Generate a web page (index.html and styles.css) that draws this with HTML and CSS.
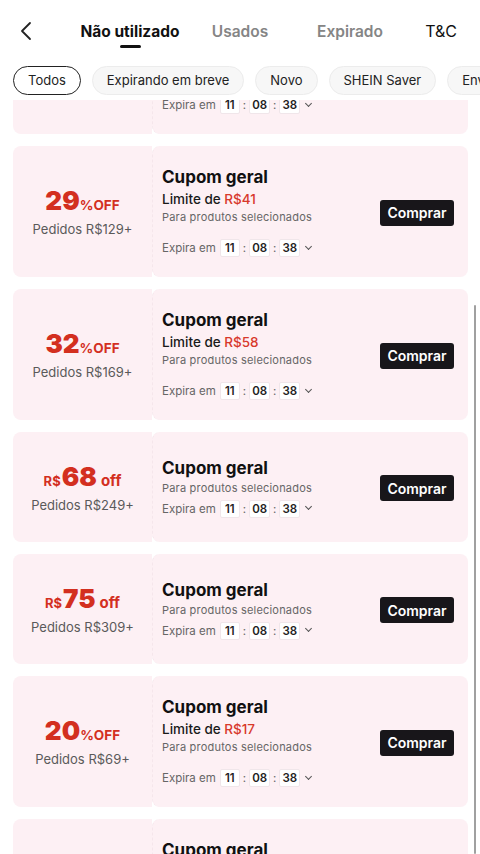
FILE: index.html
```html
<!DOCTYPE html>
<html lang="pt">
<head>
  <meta charset="UTF-8" />
  <meta name="viewport" content="width=device-width, initial-scale=1.0"/>
  <title>Cupons</title>
  <link rel="stylesheet" href="styles.css">
</head>
<body>

  <header class="top-bar">
    <svg class="back" width="14" height="20" viewBox="0 0 14 20"><path d="M11 2 L3 10 L11 18" fill="none" stroke="#222" stroke-width="1.8" stroke-linecap="round" stroke-linejoin="round"/></svg>
    <nav class="tabs">
      <span class="tab active">Não utilizado</span>
      <span class="tab">Usados</span>
      <span class="tab">Expirado</span>
    </nav>
    <span class="tc">T&amp;C</span>
  </header>

  <div class="chips">
    <span class="chip selected">Todos</span>
    <span class="chip">Expirando em breve</span>
    <span class="chip">Novo</span>
    <span class="chip">SHEIN Saver</span>
    <span class="chip">Envio grátis</span>
  </div>

  <main class="viewport">
    <div class="scroll-thumb"></div>
    <div class="list">

      <div class="coupon limited">
        <div class="stub">
          <div class="amount"><b>25</b><small>%OFF</small></div>
          <div class="min">Pedidos R$99+</div>
        </div>
        <div class="body">
          <div class="info">
            <div class="title">Cupom geral</div>
            <div class="limit">Limite de <em>R$30</em></div>
            <div class="scope">Para produtos selecionados</div>
            <div class="expire">Expira em <i>11</i>:<i>08</i>:<i>38</i><span class="chev"></span></div>
          </div>
          <button class="buy">Comprar</button>
        </div>
      </div>

      <div class="coupon limited">
        <div class="stub">
          <div class="amount"><b>29</b><small>%OFF</small></div>
          <div class="min">Pedidos R$129+</div>
        </div>
        <div class="body">
          <div class="info">
            <div class="title">Cupom geral</div>
            <div class="limit">Limite de <em>R$41</em></div>
            <div class="scope">Para produtos selecionados</div>
            <div class="expire">Expira em <i>11</i>:<i>08</i>:<i>38</i><span class="chev"></span></div>
          </div>
          <button class="buy">Comprar</button>
        </div>
      </div>

      <div class="coupon limited">
        <div class="stub">
          <div class="amount"><b>32</b><small>%OFF</small></div>
          <div class="min">Pedidos R$169+</div>
        </div>
        <div class="body">
          <div class="info">
            <div class="title">Cupom geral</div>
            <div class="limit">Limite de <em>R$58</em></div>
            <div class="scope">Para produtos selecionados</div>
            <div class="expire">Expira em <i>11</i>:<i>08</i>:<i>38</i><span class="chev"></span></div>
          </div>
          <button class="buy">Comprar</button>
        </div>
      </div>

      <div class="coupon">
        <div class="stub">
          <div class="amount"><small class="cur">R$</small><b>68</b><small class="off">off</small></div>
          <div class="min">Pedidos R$249+</div>
        </div>
        <div class="body">
          <div class="info">
            <div class="title">Cupom geral</div>
            <div class="scope">Para produtos selecionados</div>
            <div class="expire">Expira em <i>11</i>:<i>08</i>:<i>38</i><span class="chev"></span></div>
          </div>
          <button class="buy">Comprar</button>
        </div>
      </div>

      <div class="coupon">
        <div class="stub">
          <div class="amount"><small class="cur">R$</small><b>75</b><small class="off">off</small></div>
          <div class="min">Pedidos R$309+</div>
        </div>
        <div class="body">
          <div class="info">
            <div class="title">Cupom geral</div>
            <div class="scope">Para produtos selecionados</div>
            <div class="expire">Expira em <i>11</i>:<i>08</i>:<i>38</i><span class="chev"></span></div>
          </div>
          <button class="buy">Comprar</button>
        </div>
      </div>

      <div class="coupon limited">
        <div class="stub">
          <div class="amount"><b>20</b><small>%OFF</small></div>
          <div class="min">Pedidos R$69+</div>
        </div>
        <div class="body">
          <div class="info">
            <div class="title">Cupom geral</div>
            <div class="limit">Limite de <em>R$17</em></div>
            <div class="scope">Para produtos selecionados</div>
            <div class="expire">Expira em <i>11</i>:<i>08</i>:<i>38</i><span class="chev"></span></div>
          </div>
          <button class="buy">Comprar</button>
        </div>
      </div>

      <div class="coupon limited">
        <div class="stub">
          <div class="amount"><b>15</b><small>%OFF</small></div>
          <div class="min">Pedidos R$49+</div>
        </div>
        <div class="body">
          <div class="info">
            <div class="title">Cupom geral</div>
            <div class="limit">Limite de <em>R$12</em></div>
            <div class="scope">Para produtos selecionados</div>
            <div class="expire">Expira em <i>11</i>:<i>08</i>:<i>38</i><span class="chev"></span></div>
          </div>
          <button class="buy">Comprar</button>
        </div>
      </div>

    </div>
  </main>

</body>
</html>
```

FILE: styles.css
```css
* {
  box-sizing: border-box;
}

html, body {
  margin: 0;
  padding: 0;
  height: 854px;
  overflow: hidden;
  background: #fff;
  color: #111;
  font-family: Inter, "Noto Sans", sans-serif;
}

body {
  display: flex;
  flex-direction: column;
}

/* header with tabs */
.top-bar {
  height: 56px;
  display: flex;
  align-items: center;
  padding: 6px 23px 0 19px;
  box-shadow: 0 1px 2px rgba(0, 0, 0, 0.05);
  position: relative;
  z-index: 2;
  background: #fff;
}

.back {
  flex: none;
}

.tabs {
  display: flex;
  margin-left: 42px;
  flex: 1;
}

.tab {
  width: 110px;
  text-align: center;
  font-size: 15.5px;
  font-weight: 600;
  color: #858585;
  position: relative;
}

.tab.active {
  color: #111;
  font-weight: 700;
}

.tab.active::after {
  content: '';
  position: absolute;
  left: 50%;
  bottom: -7px;
  width: 21px;
  height: 3px;
  margin-left: -10px;
  background: #111;
  border-radius: 2px;
}

.tc {
  font-size: 16px;
  font-weight: 400;
  color: #111;
}

/* filter chips */
.chips {
  display: flex;
  gap: 11px;
  padding: 10px 0 6px 13px;
  height: 44px;
  overflow: hidden;
  white-space: nowrap;
  background: #fff;
  position: relative;
  z-index: 2;
}

.chip {
  flex: none;
  height: 29px;
  line-height: 27px;
  padding: 0 14px;
  border-radius: 15px;
  border: 1px solid #ececec;
  background: #f7f7f7;
  font-size: 13px;
  color: #222;
}

.chip.selected {
  background: #fff;
  border: 1.5px solid #222;
  line-height: 26px;
  padding: 0 14px;
}

/* coupon list */
.viewport {
  flex: 1;
  overflow: hidden;
  position: relative;
}

.list {
  margin-top: -97px;
  padding: 0 12px 0 13px;
  display: flex;
  flex-direction: column;
  gap: 12px;
}

.scroll-thumb {
  position: absolute;
  right: 4px;
  top: 205px;
  bottom: 0;
  width: 2.5px;
  border-radius: 2px;
  background: #a0a0a0;
  z-index: 3;
}

.coupon {
  display: flex;
  min-height: 110px;
}

.coupon.limited {
  min-height: 131px;
}

.stub {
  width: 139px;
  flex: none;
  background: #fdf0f4;
  border-radius: 8px 0 0 8px;
  display: flex;
  flex-direction: column;
  align-items: center;
  justify-content: center;
}

.amount {
  color: #d32f1f;
  font-weight: 700;
  line-height: 30px;
}

.amount b {
  font-size: 26px;
}

.amount small {
  font-size: 13.5px;
  margin-left: 0;
}

.amount small.cur {
  font-size: 13px;
  margin: 0 1px 0 0;
}

.amount small.off {
  font-size: 15px;
  margin-left: 4px;
}

.min {
  font-size: 13px;
  color: #5a5a5a;
  margin-top: 1px;
}

.body {
  flex: 1;
  background: #fdf0f4;
  border-radius: 8px;
  border-left: 1px dashed #f5e6eb;
  display: flex;
  align-items: center;
  padding: 0 14px 0 9px;
}

.info {
  flex: 1;
}

.title {
  font-size: 17px;
  font-weight: 700;
  line-height: 22px;
  margin-bottom: 1px;
}

.limit {
  font-size: 13.5px;
  font-weight: 500;
  line-height: 20px;
  color: #1a1a1a;
}

.limit em {
  font-style: normal;
  color: #d8392b;
}

.scope {
  font-size: 11px;
  color: #666;
  line-height: 17px;
  letter-spacing: 0.2px;
}

.limited .expire {
  margin-top: 13px;
}

.expire {
  margin-top: 3px;
  font-size: 11.5px;
  color: #666;
  display: flex;
  align-items: center;
  gap: 3px;
}

.expire i {
  font-style: normal;
  font-weight: 600;
  font-size: 11.5px;
  color: #222;
  background: #fff;
  border: 1px solid #f0e6ea;
  border-radius: 2px;
  min-width: 20px;
  height: 18px;
  line-height: 16px;
  text-align: center;
  padding: 0 2px;
}

.expire i:first-child {
  margin-left: 1px;
}

.chev {
  width: 5px;
  height: 5px;
  border-right: 1.2px solid #555;
  border-bottom: 1.2px solid #555;
  transform: rotate(45deg);
  margin: -4px 0 0 3px;
}

.buy {
  flex: none;
  width: 74px;
  height: 26px;
  border: none;
  border-radius: 3px;
  background: #18161a;
  color: #fff;
  font-family: Inter, sans-serif;
  font-size: 14px;
  font-weight: 600;
  padding: 0;
  margin-top: 2px;
}
```
